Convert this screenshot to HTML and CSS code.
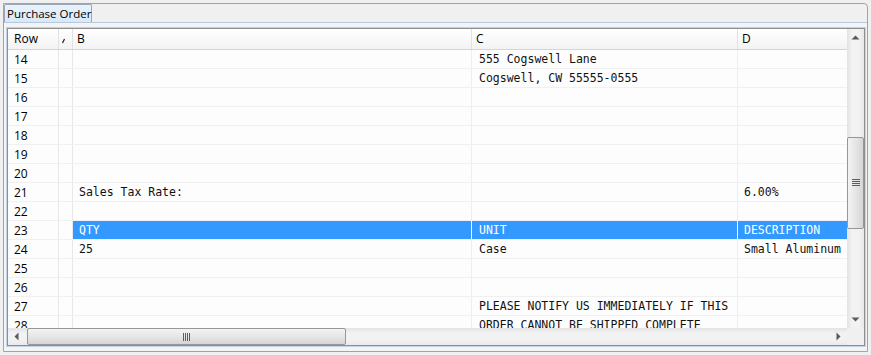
FILE: index.html
```html
<!DOCTYPE html>
<html>
<head>
<meta charset="utf-8">
<link rel="stylesheet" href="styles.css">
</head>
<body>
<div class="frame">
  <div class="tabstrip">
    <div class="tab">Purchase Order</div>
  </div>
  <div class="page">
    <div class="inset">
      <div class="view">
        <div class="table">
          <div class="row head">
            <div class="c rn">Row</div>
            <div class="c ca"><svg width="6" height="7" viewBox="0 0 6 7"><path d="M1.5 6 L3.5 2" stroke="#222" stroke-width="1.2"/></svg></div>
            <div class="c cb">B</div>
            <div class="c cc">C</div>
            <div class="c cd">D</div>
          </div>
          <div class="row"><div class="c rn">14</div><div class="c ca"></div><div class="c cb m"></div><div class="c cc m">555 Cogswell Lane</div><div class="c cd m"></div></div>
          <div class="row"><div class="c rn">15</div><div class="c ca"></div><div class="c cb m"></div><div class="c cc m">Cogswell, CW 55555-0555</div><div class="c cd m"></div></div>
          <div class="row"><div class="c rn">16</div><div class="c ca"></div><div class="c cb m"></div><div class="c cc m"></div><div class="c cd m"></div></div>
          <div class="row"><div class="c rn">17</div><div class="c ca"></div><div class="c cb m"></div><div class="c cc m"></div><div class="c cd m"></div></div>
          <div class="row"><div class="c rn">18</div><div class="c ca"></div><div class="c cb m"></div><div class="c cc m"></div><div class="c cd m"></div></div>
          <div class="row"><div class="c rn">19</div><div class="c ca"></div><div class="c cb m"></div><div class="c cc m"></div><div class="c cd m"></div></div>
          <div class="row"><div class="c rn">20</div><div class="c ca"></div><div class="c cb m"></div><div class="c cc m"></div><div class="c cd m"></div></div>
          <div class="row"><div class="c rn">21</div><div class="c ca"></div><div class="c cb m">Sales Tax Rate:</div><div class="c cc m"></div><div class="c cd m">6.00%</div></div>
          <div class="row"><div class="c rn">22</div><div class="c ca"></div><div class="c cb m"></div><div class="c cc m"></div><div class="c cd m"></div></div>
          <div class="row sel"><div class="c rn">23</div><div class="c ca"></div><div class="c cb m">QTY</div><div class="c cc m">UNIT</div><div class="c cd m">DESCRIPTION</div></div>
          <div class="row"><div class="c rn">24</div><div class="c ca"></div><div class="c cb m">25</div><div class="c cc m">Case</div><div class="c cd m">Small Aluminum</div></div>
          <div class="row"><div class="c rn">25</div><div class="c ca"></div><div class="c cb m"></div><div class="c cc m"></div><div class="c cd m"></div></div>
          <div class="row"><div class="c rn">26</div><div class="c ca"></div><div class="c cb m"></div><div class="c cc m"></div><div class="c cd m"></div></div>
          <div class="row"><div class="c rn">27</div><div class="c ca"></div><div class="c cb m"></div><div class="c cc m">PLEASE NOTIFY US IMMEDIATELY IF THIS</div><div class="c cd m"></div></div>
          <div class="row"><div class="c rn">28</div><div class="c ca"></div><div class="c cb m"></div><div class="c cc m">ORDER CANNOT BE SHIPPED COMPLETE</div><div class="c cd m"></div></div>
        </div>
        <div class="vscroll">
          <div class="arrow"><svg width="9" height="5" viewBox="0 0 9 5"><path d="M0.5 4.5 L4.5 0.5 L8.5 4.5 Z" fill="#5a5a5a"/></svg></div>
          <div class="track vtrack">
            <div class="vthumb"><svg width="8" height="8" viewBox="0 0 8 8"><path d="M0 0.5H8M0 2.5H8M0 4.5H8M0 6.5H8" stroke="#5e5e5e" stroke-width="1"/></svg></div>
          </div>
          <div class="arrow"><svg width="9" height="5" viewBox="0 0 9 5"><path d="M0.5 0.5 L4.5 4.5 L8.5 0.5 Z" fill="#5a5a5a"/></svg></div>
        </div>
        <div class="hscroll">
          <div class="arrow"><svg width="5" height="9" viewBox="0 0 5 9"><path d="M4.5 0.5 L0.5 4.5 L4.5 8.5 Z" fill="#5a5a5a"/></svg></div>
          <div class="track htrack">
            <div class="hthumb"><svg width="8" height="8" viewBox="0 0 8 8"><path d="M0.5 0V8M2.5 0V8M4.5 0V8M6.5 0V8" stroke="#5e5e5e" stroke-width="1"/></svg></div>
          </div>
          <div class="arrow"><svg width="5" height="9" viewBox="0 0 5 9"><path d="M0.5 0.5 L4.5 4.5 L0.5 8.5 Z" fill="#5a5a5a"/></svg></div>
        </div>
        <div class="corner"></div>
      </div>
    </div>
  </div>
</div>
</body>
</html>
```
FILE: styles.css
```css
html, body {
  margin: 0;
  padding: 0;
  background: #f0f0f0;
}
body {
  width: 871px;
  height: 355px;
  overflow: hidden;
  font-family: "Open Sans", "Noto Sans", sans-serif;
}
.frame {
  margin: 3px 0 0 3px;
  width: 863px;
  height: 347px;
  border: 1px solid #a3a3a3;
  border-top-right-radius: 4px;
  background: #f0f0f0;
  display: flex;
  flex-direction: column;
}
.tabstrip {
  height: 18px;
  flex: none;
  display: flex;
  align-items: flex-end;
}
.tab {
  height: 18px;
  width: 88px;
  border: 1px solid #9aa7b6;
  border-bottom: none;
  border-top-left-radius: 2px;
  border-top-right-radius: 2px;
  background: linear-gradient(#eaf3fc, #d9e8f7);
  font-size: 11.5px;
  line-height: 17px;
  color: #000;
  padding-left: 2px;
  box-sizing: border-box;
  white-space: nowrap;
}
.page {
  flex: 1;
  min-height: 0;
  border-top: 1px solid #b7c9dc;
  padding: 4px 1px 4px 2px;
  display: flex;
  background: #f4f4f4;
}
.inset {
  flex: 1;
  min-height: 0;
  border: 1px solid #c3d3e6;
  display: flex;
}
.view {
  flex: 1;
  min-height: 0;
  min-width: 0;
  border: 1px solid #8e8f8f;
  display: grid;
  grid-template-columns: minmax(0, 1fr) 17px;
  grid-template-rows: minmax(0, 1fr) 17px;
  background: #fff;
  overflow: hidden;
}
.table {
  overflow: hidden;
  min-height: 0;
  background: #fdfdfd;
}
.row {
  display: flex;
  height: 18px;
  border-bottom: 1px solid #f0f0f0;
  white-space: nowrap;
}
.c {
  flex: none;
  box-sizing: border-box;
  border-right: 1px solid #eeeeee;
  height: 18px;
  line-height: 19px;
  overflow: visible;
}
.rn {
  width: 51px;
  padding-left: 6px;
  font-size: 12px;
  color: #000;
  border-right-color: #e8e8e8;
}
.ca {
  width: 14px;
  border-right-color: #e8e8e8;
}
.cb { width: 399px; padding-left: 6px; }
.cc { width: 266px; padding-left: 7px; }
.cd { width: 200px; padding-left: 6px; border-right: none; }
.m {
  font-family: "DejaVu Sans Mono", "Liberation Mono", monospace;
  font-size: 11.5px;
  color: #111;
}
.head {
  height: 20px;
  border-bottom: 1px solid #d5d5d5;
  background: linear-gradient(#ffffff, #f3f3f4);
}
.head .c {
  height: 20px;
  line-height: 20px;
  font-size: 12px;
  border-right-color: #e2e2e2;
}
.head .cb, .head .cc, .head .cd { padding-left: 4px; }
.head .ca svg { display: block; margin: 8px 0 0 2px; }
.sel .cb, .sel .cc, .sel .cd {
  background: #3399ff;
  color: #fff;
  border-right-color: #ffffff;
}
.sel .cd { border-right: none; }
.vscroll, .hscroll {
  display: flex;
  min-height: 0;
}
.vscroll {
  flex-direction: column;
  grid-row: 1;
  grid-column: 2;
  background: linear-gradient(90deg, #e3e3e3, #f2f2f2 30%, #f2f2f2 70%, #e9e9e9);
}
.hscroll {
  grid-row: 2;
  grid-column: 1;
  background: linear-gradient(#e3e3e3, #f2f2f2 30%, #f2f2f2 70%, #e9e9e9);
}
.arrow {
  width: 17px;
  height: 17px;
  flex: none;
  display: flex;
  align-items: center;
  justify-content: center;
}
.track { flex: 1; min-height: 0; }
.vthumb {
  margin: 91px 0 0 0;
  height: 90px;
  width: 15px;
  border: 1px solid #979797;
  border-radius: 2px;
  background: linear-gradient(90deg, #f3f3f3, #e6e6e6 50%, #d5d5d5);
  display: flex;
  align-items: center;
  justify-content: center;
}
.hthumb {
  margin: 0 0 0 2px;
  width: 317px;
  height: 15px;
  border: 1px solid #979797;
  border-radius: 2px;
  background: linear-gradient(#f3f3f3, #e6e6e6 50%, #d5d5d5);
  display: flex;
  align-items: center;
  justify-content: center;
}
.corner {
  grid-row: 2;
  grid-column: 2;
  background: #f0f0f0;
}
```
